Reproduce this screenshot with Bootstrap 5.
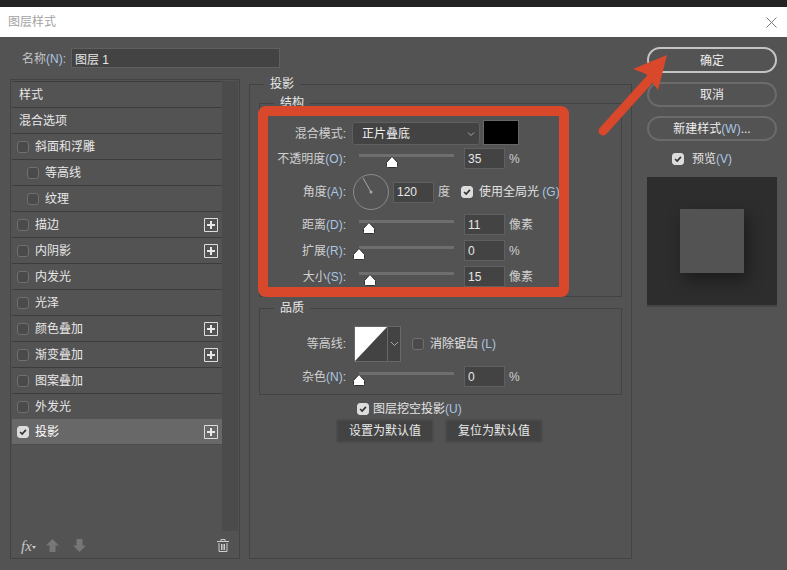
<!DOCTYPE html>
<html lang="zh-CN">
<head>
<meta charset="utf-8">
<title>图层样式</title>
<link href="https://cdn.jsdelivr.net/npm/bootstrap@5.3.0/dist/css/bootstrap.min.css" rel="stylesheet">
<style>
html,body{margin:0;height:100%;overflow:hidden}
body{width:787px;height:570px;background:#535353;color:#e2e2e2;font:12px/16px "Liberation Sans","Noto Sans CJK SC",sans-serif;position:relative}
.ps-strip{height:7px;background:#232323}
.ps-title{height:30px;background:#fff;color:#a3a3a3;padding:0 10px 0 8px}
.ps-main{padding:10px 10px 0}
.ps-left{width:622px}
.ps-right{width:130px;margin-left:15px}
.ps-k{color:#a9c6e2}
.ps-name{height:20px;margin:1px 0 11px}
.ps-name label{width:61px;text-align:right;color:#c4c4c4;padding:1px 5px 0 0}
.ps-in{background:#434343;border:1px solid #5f5f5f;color:#e6e6e6;font:inherit;padding:0 0 0 3px;border-radius:0;min-height:0;line-height:1;box-shadow:none}
.ps-in:focus{background:#434343;color:#e6e6e6;border-color:#5f5f5f;box-shadow:none}
.ps-name .ps-in{width:209px;height:20px;margin-left:0}
.ps-panel{width:230px;height:480px;border:1px solid #434343;margin-right:9px;padding:1px;flex:none}
.ps-listwrap{height:452px}
.ps-list{width:210px;flex:none;background:transparent;border-radius:0}
.ps-item{height:26px;padding:0 4px 0 5px;background:transparent;color:#e8e8e8;border:0;border-bottom:1px solid #3c3c3c;border-radius:0!important;display:flex;align-items:center;font-size:12px}
.ps-item.ps-top{border-top:1px solid #3c3c3c;height:27px;padding-left:7px}
.ps-item.ps-plain{padding-left:7px}
.ps-item.ps-ind{padding-left:15px}
.ps-item.active{background:#686868;color:#fff;border-color:#4c4c4c}
.ps-scroll{width:16px;background:#4b4b4b}
.ps-tool{height:26px;padding:3px 9px 0}
.ps-fx{font:italic 15px/16px "Liberation Serif",serif;color:#c8c8c8;width:25px}
.ps-up{margin-right:14px}
.form-check-input.ps-cb{width:12px;height:12px;margin:0 6px 0 0;flex:none;background-color:#4a4a4a;border:1.5px solid #6f6f6f;border-radius:3px;box-shadow:none}
.form-check-input.ps-cb:checked{background-color:#dcdcdc;border-color:#dcdcdc;--bs-form-check-bg-image:url("data:image/svg+xml,%3csvg xmlns='http://www.w3.org/2000/svg' viewBox='0 0 12 12'%3e%3cpath fill='none' stroke='%23333' stroke-width='2' d='M2.5 6l2.5 2.5 4.500-5'/%3e%3c/svg%3e")}
.form-check-input.ps-cb.ps-aa{margin-left:11px}
.ps-plus{margin-left:auto;display:block;flex:none}
.ps-fs{border:1px solid #434343;padding:0;min-width:0;margin:0}
.ps-fs legend{float:none;width:auto;font-size:12px;line-height:16px;margin:0 0 0 6px;padding:0 6px;color:#e8e8e8}
.ps-outer{width:383px;height:483px;margin-top:-3px;padding:0 9px}
.ps-outer>legend{margin-left:5px}
.ps-sub{margin-top:3px}
.ps-struct{height:202px;padding:8px 8px 0}
.ps-qual{height:95px;margin-top:3px;padding:10px 8px 0}
.ps-rw{display:flex;align-items:center}
.ps-lb{width:78px;text-align:right;color:#d0d0d0;flex:none;white-space:nowrap}
.ps-r1{height:26px}
.ps-r1 .ps-lb{margin-top:3px}
.ps-r21{height:21px}
.ps-mt3{margin-top:3px}.ps-mt4{margin-top:4px}.ps-mt5{margin-top:5px}
.form-select.ps-sel{width:128px;height:23px;margin:3px 3px 0 6px;padding:0 0 0 9px;background-color:#434343;border:1px solid #5f5f5f;border-radius:3px;color:#efefef;font:inherit;box-shadow:none;background-position:right 3px center;background-size:10px;--bs-form-select-bg-img:url("data:image/svg+xml,%3csvg xmlns='http://www.w3.org/2000/svg' viewBox='0 0 10 10'%3e%3cpath fill='none' stroke='%23aaa' d='M2 3.500l3 3 3-3'/%3e%3c/svg%3e")}
.ps-swatch{width:36px;height:25px;background:#000;border:1px solid #666}
.ps-sl{width:95px;height:21px;margin:0 10px 0 13px;position:relative;flex:none}
.ps-track{display:block;height:3px;background:#6e6e6e;position:absolute;left:0;right:0;top:6px}
.ps-thumb{position:absolute;top:8px;width:12px;height:12px;margin-left:-6px;display:block}
.ps-num{width:41px;height:21px;flex:none}
.ps-unit{margin-left:4px;color:#d0d0d0}
.ps-deg{margin-right:11px}
.ps-dial{display:block;margin:0 4px 0 7px;flex:none}
.ps-contour{display:flex;margin-left:8px;height:36px}
.ps-ch{display:block;width:34px;height:36px;border:1px solid #686868;flex:none}
.ps-cd{width:13px;height:36px;background:#434343;border:1px solid #686868;border-left:0;display:flex;align-items:center;justify-content:center}
.ps-knock{height:16px;margin-top:6px;padding-left:98px;color:#e4e4e4}
.ps-knock .ps-cb{margin-right:4px}
.ps-defs{margin-top:2px;gap:11px;padding-right:2px}
.btn.ps-def{width:98px;height:24px;padding:0;background:#434343;border:2px solid #4b4b4b;border-radius:3px;color:#e8e8e8;font:inherit;line-height:18px}
.btn.ps-pill{display:block;width:130px;height:25px;padding:0;background:transparent;border:2px solid #6b6b6b;color:#eee;font:inherit;line-height:20px;margin-bottom:9px}
.btn.ps-pill.ps-prim{border-color:#c4c4c4;height:26px;padding-top:1px;line-height:20px}
.ps-prev{height:18px;margin-bottom:9px;padding-left:25px;color:#e4e4e4}
.ps-prev .ps-cb{margin-right:8px}
.ps-view{height:130px;background:#2d2d2d;border-bottom:2px solid #454545}
.ps-sq{width:64px;height:64px;background:#535353;box-shadow:4px 7px 15px rgba(0,0,0,.42)}
.ps-frame{position:absolute;left:258px;top:106px;width:311px;height:191px;border:10px solid #d9482b;border-radius:8px;pointer-events:none}
.ps-arrow{position:absolute;left:595px;top:50px;pointer-events:none}
</style>
</head>
<body>
<div class="ps-strip"></div>
<div class="ps-title d-flex align-items-center justify-content-between">
  <span>图层样式</span>
  <svg width="11" height="11" viewBox="0 0 11 11"><path d="M.5.5l10 10M10.500.5l-10 10" stroke="#777" fill="none"/></svg>
</div>
<div class="ps-main d-flex">
  <div class="ps-left">
    <div class="ps-name d-flex align-items-center">
      <label for="nm">名称<span class="ps-k">(N)</span>:</label>
      <input id="nm" class="form-control ps-in" value="图层 1">
    </div>
    <div class="d-flex">
      <div class="ps-panel d-flex flex-column">
        <div class="ps-listwrap d-flex">
          <div class="list-group ps-list">
            <div class="list-group-item ps-item ps-top">样式</div>
            <div class="list-group-item ps-item ps-plain">混合选项</div>
            <div class="list-group-item ps-item"><input type="checkbox" class="form-check-input ps-cb">斜面和浮雕</div>
            <div class="list-group-item ps-item ps-ind"><input type="checkbox" class="form-check-input ps-cb">等高线</div>
            <div class="list-group-item ps-item ps-ind"><input type="checkbox" class="form-check-input ps-cb">纹理</div>
            <div class="list-group-item ps-item"><input type="checkbox" class="form-check-input ps-cb">描边<svg class="ps-plus" width="14" height="14" viewBox="0 0 14 14"><path d="M.5.5h13v13H.5z" fill="none" stroke="#ddd"/><path d="M3 7h8M7 3v8" stroke="#e8e8e8" stroke-width="2"/></svg></div>
            <div class="list-group-item ps-item"><input type="checkbox" class="form-check-input ps-cb">内阴影<svg class="ps-plus" width="14" height="14" viewBox="0 0 14 14"><path d="M.5.5h13v13H.5z" fill="none" stroke="#ddd"/><path d="M3 7h8M7 3v8" stroke="#e8e8e8" stroke-width="2"/></svg></div>
            <div class="list-group-item ps-item"><input type="checkbox" class="form-check-input ps-cb">内发光</div>
            <div class="list-group-item ps-item"><input type="checkbox" class="form-check-input ps-cb">光泽</div>
            <div class="list-group-item ps-item"><input type="checkbox" class="form-check-input ps-cb">颜色叠加<svg class="ps-plus" width="14" height="14" viewBox="0 0 14 14"><path d="M.5.5h13v13H.5z" fill="none" stroke="#ddd"/><path d="M3 7h8M7 3v8" stroke="#e8e8e8" stroke-width="2"/></svg></div>
            <div class="list-group-item ps-item"><input type="checkbox" class="form-check-input ps-cb">渐变叠加<svg class="ps-plus" width="14" height="14" viewBox="0 0 14 14"><path d="M.5.5h13v13H.5z" fill="none" stroke="#ddd"/><path d="M3 7h8M7 3v8" stroke="#e8e8e8" stroke-width="2"/></svg></div>
            <div class="list-group-item ps-item"><input type="checkbox" class="form-check-input ps-cb">图案叠加</div>
            <div class="list-group-item ps-item"><input type="checkbox" class="form-check-input ps-cb">外发光</div>
            <div class="list-group-item ps-item active"><input type="checkbox" class="form-check-input ps-cb" checked>投影<svg class="ps-plus" width="14" height="14" viewBox="0 0 14 14"><path d="M.5.5h13v13H.5z" fill="none" stroke="#ddd"/><path d="M3 7h8M7 3v8" stroke="#e8e8e8" stroke-width="2"/></svg></div>
          </div>
          <div class="ps-scroll"></div>
        </div>
        <div class="ps-tool d-flex align-items-center">
          <span class="ps-fx">fx<svg width="4" height="3" viewBox="0 0 4 3"><path d="M0 0h4L2 3z" fill="#ccc"/></svg></span>
          <svg width="13" height="13" viewBox="0 0 13 13" class="ps-up"><path d="M6.500 0L13 6.500H9.500V13h-6V6.500H0z" fill="#777"/></svg>
          <svg width="13" height="13" viewBox="0 0 13 13"><path d="M6.500 13L13 6.500H9.500V0h-6v6.500H0z" fill="#777"/></svg>
          <svg width="12" height="13" viewBox="0 0 12 13" class="ms-auto"><path d="M0 2.500h12M4 2.500V.5h4v2M2 4v8.500h8V4M4.500 5v6M6 5v6M7.500 5v6" fill="none" stroke="#cfcfcf"/></svg>
        </div>
      </div>
      <fieldset class="ps-fs ps-outer">
        <legend>投影</legend>
        <fieldset class="ps-fs ps-struct ps-sub">
          <legend>结构</legend>
          <div class="ps-rw ps-r1">
            <span class="ps-lb">混合模式:</span>
            <select class="form-select ps-sel"><option>正片叠底</option></select>
            <span class="ps-swatch"></span>
          </div>
          <div class="ps-rw ps-r21 ps-mt3">
            <span class="ps-lb">不透明度<span class="ps-k">(O)</span>:</span>
            <span class="ps-sl"><i class="ps-track"></i><svg class="ps-thumb" style="left:33px" viewBox="0 0 12 12"><path d="M6 .5L11.500 6.500V10.500Q11.500 11.500 10.500 11.500H1.500Q.5 11.500 .5 10.500V6.500Z" fill="#fff" stroke="#333"/></svg></span>
            <input class="form-control ps-in ps-num" value="35">
            <span class="ps-unit ps-k">%</span>
          </div>
          <div class="ps-rw ps-mt5">
            <span class="ps-lb">角度<span class="ps-k">(A)</span>:</span>
            <svg class="ps-dial" width="36" height="36" viewBox="0 0 36 36"><circle cx="18" cy="18" r="17.500" fill="none" stroke="#8c8c8c"/><path d="M18 18L10 4" stroke="#a8a8a8"/><circle cx="18" cy="18" r="1.500" fill="#a8a8a8"/></svg>
            <input class="form-control ps-in ps-num" value="120">
            <span class="ps-unit ps-deg">度</span>
            <input type="checkbox" class="form-check-input ps-cb" checked>
            <span class="text-nowrap">使用全局光 <span class="ps-k">(G)</span></span>
          </div>
          <div class="ps-rw ps-r21 ps-mt4">
            <span class="ps-lb">距离<span class="ps-k">(D)</span>:</span>
            <span class="ps-sl"><i class="ps-track"></i><svg class="ps-thumb" style="left:10px" viewBox="0 0 12 12"><path d="M6 .5L11.500 6.500V10.500Q11.500 11.500 10.500 11.500H1.500Q.5 11.500 .5 10.500V6.500Z" fill="#fff" stroke="#333"/></svg></span>
            <input class="form-control ps-in ps-num" value="11">
            <span class="ps-unit">像素</span>
          </div>
          <div class="ps-rw ps-r21 ps-mt5">
            <span class="ps-lb">扩展<span class="ps-k">(R)</span>:</span>
            <span class="ps-sl"><i class="ps-track"></i><svg class="ps-thumb" style="left:0" viewBox="0 0 12 12"><path d="M6 .5L11.500 6.500V10.500Q11.500 11.500 10.500 11.500H1.500Q.5 11.500 .5 10.500V6.500Z" fill="#fff" stroke="#333"/></svg></span>
            <input class="form-control ps-in ps-num" value="0">
            <span class="ps-unit ps-k">%</span>
          </div>
          <div class="ps-rw ps-r21 ps-mt5">
            <span class="ps-lb">大小<span class="ps-k">(S)</span>:</span>
            <span class="ps-sl"><i class="ps-track"></i><svg class="ps-thumb" style="left:11px" viewBox="0 0 12 12"><path d="M6 .5L11.500 6.500V10.500Q11.500 11.500 10.500 11.500H1.500Q.5 11.500 .5 10.500V6.500Z" fill="#fff" stroke="#333"/></svg></span>
            <input class="form-control ps-in ps-num" value="15">
            <span class="ps-unit">像素</span>
          </div>
        </fieldset>
        <fieldset class="ps-fs ps-qual">
          <legend>品质</legend>
          <div class="ps-rw">
            <span class="ps-lb">等高线:</span>
            <span class="ps-contour">
              <svg class="ps-ch" viewBox="0 0 34 36" preserveAspectRatio="none"><path d="M0 0h34v36H0z" fill="#434343"/><path d="M0 0h34L0 36z" fill="#fff"/></svg>
              <span class="ps-cd"><svg width="9" height="6" viewBox="0 0 9 6"><path d="M1 1l3.500 3.500L8 1" fill="none" stroke="#aaa"/></svg></span>
            </span>
            <input type="checkbox" class="form-check-input ps-cb ps-aa">
            <span>消除锯齿 <span class="ps-k">(L)</span></span>
          </div>
          <div class="ps-rw ps-r21 ps-mt4">
            <span class="ps-lb">杂色<span class="ps-k">(N)</span>:</span>
            <span class="ps-sl"><i class="ps-track"></i><svg class="ps-thumb" style="left:0" viewBox="0 0 12 12"><path d="M6 .5L11.500 6.500V10.500Q11.500 11.500 10.500 11.500H1.500Q.5 11.500 .5 10.500V6.500Z" fill="#fff" stroke="#333"/></svg></span>
            <input class="form-control ps-in ps-num" value="0">
            <span class="ps-unit ps-k">%</span>
          </div>
        </fieldset>
        <div class="ps-rw ps-knock">
          <input type="checkbox" class="form-check-input ps-cb" checked>
          <span>图层挖空投影<span class="ps-k">(U)</span></span>
        </div>
        <div class="d-flex justify-content-center ps-defs">
          <button type="button" class="btn ps-def">设置为默认值</button>
          <button type="button" class="btn ps-def">复位为默认值</button>
        </div>
      </fieldset>
    </div>
  </div>
  <div class="ps-right">
    <button type="button" class="btn rounded-pill ps-pill ps-prim">确定</button>
    <button type="button" class="btn rounded-pill ps-pill">取消</button>
    <button type="button" class="btn rounded-pill ps-pill">新建样式<span class="ps-k">(W)</span>...</button>
    <div class="ps-rw ps-prev">
      <input type="checkbox" class="form-check-input ps-cb" checked>
      <span>预览<span class="ps-k">(V)</span></span>
    </div>
    <div class="ps-view d-flex align-items-center justify-content-center"><div class="ps-sq"></div></div>
  </div>
</div>
<div class="ps-frame"></div>
<svg class="ps-arrow" width="80" height="90" viewBox="595 50 80 90">
  <path d="M603 131L650 79" stroke="#d9482b" stroke-width="9" stroke-linecap="round" fill="none"/>
  <path d="M667 55L633 69 646 74 658 90z" fill="#d9482b"/>
</svg>
</body>
</html>
